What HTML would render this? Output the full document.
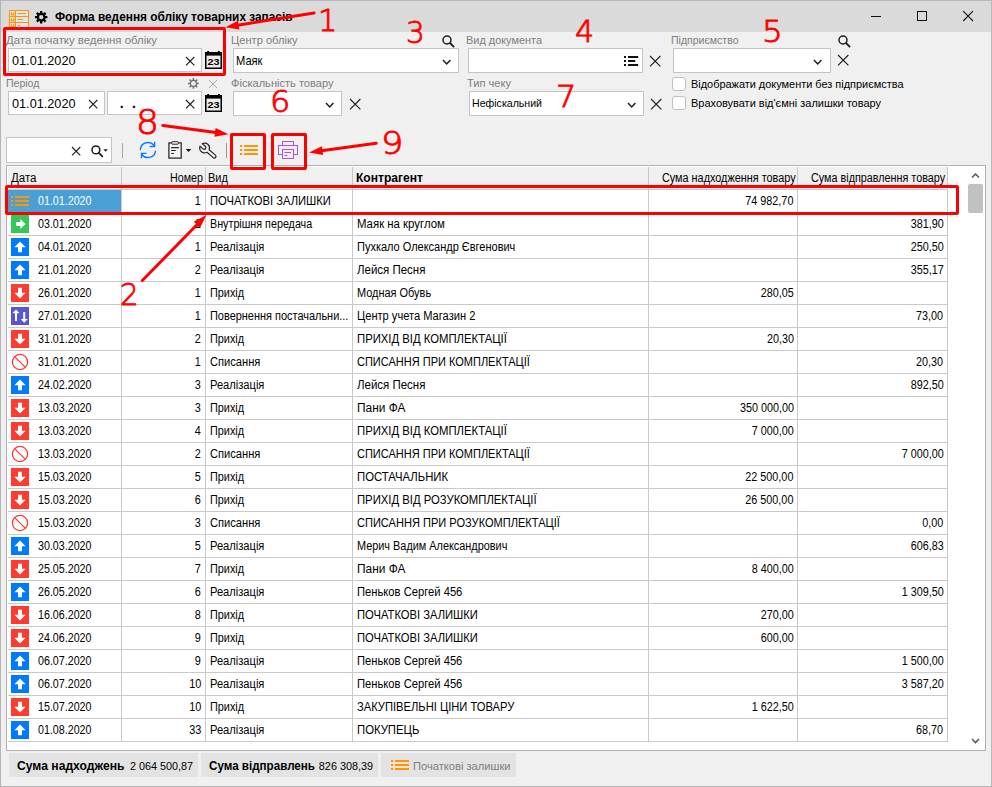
<!DOCTYPE html>
<html lang="uk"><head><meta charset="utf-8"><title>Форма ведення обліку товарних запасів</title>
<style>
html,body{margin:0;padding:0}
body{width:992px;height:787px;overflow:hidden;position:relative;background:#f0f0f0;font-family:'Liberation Sans',sans-serif;}
.t{position:absolute;white-space:pre;line-height:normal;}
svg{position:absolute;overflow:visible}
.d{font-family:'DejaVu Sans',sans-serif;font-weight:200;color:#f00;-webkit-text-stroke:0.9px #f00;transform-origin:0 0;}
</style></head>
<body>
<div style="position:absolute;left:0px;top:0px;width:992px;height:32px;background:#dadada;"></div>
<div style="position:absolute;left:0px;top:0px;width:992px;height:1px;background:#b9b9b9;"></div>
<div style="position:absolute;left:0px;top:0px;width:1px;height:787px;background:#b4b4b4;"></div>
<div style="position:absolute;left:991px;top:0px;width:1px;height:787px;background:#b9b9b9;"></div>
<div style="position:absolute;left:0px;top:786px;width:992px;height:1px;background:#b9b9b9;"></div>
<svg style="left:9px;top:10px" width="21" height="20" viewBox="0 0 21 20">
<rect x="0.5" y="0.5" width="19" height="18" fill="#dfe6f1" stroke="#ff9500" stroke-width="1"/>
<path d="M0.5 6.5H19.5M0.5 12.5H19.5M6.5 0.5V18.5" stroke="#ff9500" stroke-width="1" fill="none"/>
<path d="M8.5 3.5H17M8.5 9.5H14M8.5 15.5H11" stroke="#ff9500" stroke-width="1.2" fill="none"/>
<path d="M2.3 2V5H4.9V2M2.3 8V11H4.9V8M2.3 14V17H4.9V14" stroke="#ff9500" stroke-width="1.1" fill="none"/>
<path d="M2.6 3.2L3.6 4.4L4.6 3.2M2.6 9.2L3.6 10.4L4.6 9.2M2.6 15.2L3.6 16.4L4.6 15.2" stroke="#ff9500" stroke-width="0.9" fill="none"/>
</svg>
<svg style="left:34.8px;top:10.9px" width="12.4" height="12.4" viewBox="0 0 12.4 12.4"><path d="M9.50 6.20L12.40 6.20M8.53 8.53L10.58 10.58M6.20 9.50L6.20 12.40M3.87 8.53L1.82 10.58M2.90 6.20L0.00 6.20M3.87 3.87L1.82 1.82M6.20 2.90L6.20 0.00M8.53 3.87L10.58 1.82" stroke="#000" stroke-width="2.3" fill="none"/><circle cx="6.2" cy="6.2" r="3.3" fill="none" stroke="#000" stroke-width="2.3"/></svg>
<svg style="left:860px;top:5px" width="125" height="24" viewBox="0 0 125 24">
<path d="M11 11.5H21" stroke="#111" stroke-width="1"/>
<rect x="57.5" y="6.5" width="9" height="9" fill="none" stroke="#111" stroke-width="1"/>
<path d="M103.2 6.2L113 16M113 6.2L103.2 16" stroke="#111" stroke-width="1.1"/>
</svg>
<div style="position:absolute;left:8px;top:48px;width:192px;height:22px;background:#fff;border:1px solid #c4c4c4;"></div>
<svg style="left:185.6px;top:57px" width="8.3" height="8.3" viewBox="0 0 8.3 8.3"><path d="M0 0L8.3 8.3M8.3 0L0 8.3" stroke="#1c1c1c" stroke-width="1.1" fill="none"/></svg>
<svg style="left:205px;top:51px" width="17" height="18" viewBox="0 0 17 18">
<rect x="0.75" y="1.75" width="15.5" height="15.5" fill="#ececec" stroke="#000" stroke-width="1.5"/>
<rect x="0" y="1" width="17" height="3.6" fill="#000"/>
<rect x="2.2" y="0" width="1.8" height="2" fill="#000"/><rect x="13" y="0" width="1.8" height="2" fill="#000"/>
<text x="8.5" y="14.2" font-family="Liberation Sans, sans-serif" font-size="9.5" font-weight="bold" text-anchor="middle" fill="#000" textLength="12" lengthAdjust="spacingAndGlyphs">23</text>
</svg>
<svg style="left:441.5px;top:35.3px" width="13" height="13" viewBox="0 0 13 13">
<circle cx="5" cy="5" r="4" fill="none" stroke="#1c1c1c" stroke-width="1.5"/>
<path d="M8 8L11.6 11.6" stroke="#1c1c1c" stroke-width="1.8" stroke-linecap="round"/></svg>
<div style="position:absolute;left:233px;top:48px;width:224px;height:23px;background:#fff;border:1px solid #c4c4c4;"></div>
<svg style="left:442.8px;top:59.8px" width="7.4" height="3.9" viewBox="0 0 7.4 3.9"><path d="M0 0L3.7 3.9L7.4 0" stroke="#1c1c1c" stroke-width="1.5" fill="none"/></svg>
<div style="position:absolute;left:468px;top:48px;width:173px;height:23px;background:#fff;border:1px solid #c4c4c4;"></div>
<svg style="left:624px;top:56px" width="15" height="10" viewBox="0 0 15 10">
<path d="M0 1H2M0 5H2M0 9H2" stroke="#111" stroke-width="1.8"/>
<path d="M4 1H14.2M4 5H11.2M4 9H14.2" stroke="#111" stroke-width="1.8"/></svg>
<svg style="left:650.4px;top:56.4px" width="10.4" height="10.4" viewBox="0 0 10.4 10.4"><path d="M0 0L10.4 10.4M10.4 0L0 10.4" stroke="#1c1c1c" stroke-width="1.1" fill="none"/></svg>
<div style="position:absolute;left:673px;top:48px;width:156px;height:23px;background:#fff;border:1px solid #c4c4c4;"></div>
<svg style="left:814.4px;top:59.8px" width="7.4" height="3.9" viewBox="0 0 7.4 3.9"><path d="M0 0L3.7 3.9L7.4 0" stroke="#1c1c1c" stroke-width="1.5" fill="none"/></svg>
<svg style="left:838px;top:35.3px" width="13" height="13" viewBox="0 0 13 13">
<circle cx="5" cy="5" r="4" fill="none" stroke="#1c1c1c" stroke-width="1.5"/>
<path d="M8 8L11.6 11.6" stroke="#1c1c1c" stroke-width="1.8" stroke-linecap="round"/></svg>
<svg style="left:838.4px;top:55.4px" width="10.4" height="10.4" viewBox="0 0 10.4 10.4"><path d="M0 0L10.4 10.4M10.4 0L0 10.4" stroke="#1c1c1c" stroke-width="1.1" fill="none"/></svg>
<svg style="left:188.1px;top:77.7px" width="10.8" height="10.8" viewBox="0 0 10.8 10.8"><path d="M8.50 5.40L10.80 5.40M7.59 7.59L9.22 9.22M5.40 8.50L5.40 10.80M3.21 7.59L1.58 9.22M2.30 5.40L0.00 5.40M3.21 3.21L1.58 1.58M5.40 2.30L5.40 0.00M7.59 3.21L9.22 1.58" stroke="#727272" stroke-width="1.5" fill="none"/><circle cx="5.4" cy="5.4" r="3.1" fill="none" stroke="#727272" stroke-width="1.3"/></svg>
<svg style="left:209px;top:80px" width="8" height="8" viewBox="0 0 8 8"><path d="M0 0L8 8M8 0L0 8" stroke="#a8a8a8" stroke-width="1.0" fill="none"/></svg>
<div style="position:absolute;left:8px;top:91px;width:95px;height:22px;background:#fff;border:1px solid #c4c4c4;"></div>
<svg style="left:88.6px;top:100px" width="8.3" height="8.3" viewBox="0 0 8.3 8.3"><path d="M0 0L8.3 8.3M8.3 0L0 8.3" stroke="#1c1c1c" stroke-width="1.1" fill="none"/></svg>
<div style="position:absolute;left:107px;top:91px;width:93px;height:22px;background:#fff;border:1px solid #c4c4c4;"></div>
<svg style="left:185.6px;top:100px" width="8.3" height="8.3" viewBox="0 0 8.3 8.3"><path d="M0 0L8.3 8.3M8.3 0L0 8.3" stroke="#1c1c1c" stroke-width="1.1" fill="none"/></svg>
<svg style="left:205px;top:94px" width="17" height="18" viewBox="0 0 17 18">
<rect x="0.75" y="1.75" width="15.5" height="15.5" fill="#ececec" stroke="#000" stroke-width="1.5"/>
<rect x="0" y="1" width="17" height="3.6" fill="#000"/>
<rect x="2.2" y="0" width="1.8" height="2" fill="#000"/><rect x="13" y="0" width="1.8" height="2" fill="#000"/>
<text x="8.5" y="14.2" font-family="Liberation Sans, sans-serif" font-size="9.5" font-weight="bold" text-anchor="middle" fill="#000" textLength="12" lengthAdjust="spacingAndGlyphs">23</text>
</svg>
<div style="position:absolute;left:233px;top:91px;width:107px;height:23px;background:#fff;border:1px solid #c4c4c4;"></div>
<svg style="left:325.6px;top:102.8px" width="7.4" height="3.9" viewBox="0 0 7.4 3.9"><path d="M0 0L3.7 3.9L7.4 0" stroke="#1c1c1c" stroke-width="1.5" fill="none"/></svg>
<svg style="left:349.6px;top:99.4px" width="10.4" height="10.4" viewBox="0 0 10.4 10.4"><path d="M0 0L10.4 10.4M10.4 0L0 10.4" stroke="#1c1c1c" stroke-width="1.1" fill="none"/></svg>
<div style="position:absolute;left:469px;top:91px;width:173px;height:23px;background:#fff;border:1px solid #c4c4c4;"></div>
<svg style="left:627.6px;top:102.8px" width="7.4" height="3.9" viewBox="0 0 7.4 3.9"><path d="M0 0L3.7 3.9L7.4 0" stroke="#1c1c1c" stroke-width="1.5" fill="none"/></svg>
<svg style="left:651.3px;top:99.4px" width="10.4" height="10.4" viewBox="0 0 10.4 10.4"><path d="M0 0L10.4 10.4M10.4 0L0 10.4" stroke="#1c1c1c" stroke-width="1.1" fill="none"/></svg>
<div style="position:absolute;left:672px;top:77px;width:12px;height:12px;background:#fff;border:1px solid #c0c0c0;border-radius:3px;"></div>
<div style="position:absolute;left:672px;top:96px;width:12px;height:12px;background:#fff;border:1px solid #c0c0c0;border-radius:3px;"></div>
<div style="position:absolute;left:6px;top:137px;width:104px;height:24px;background:#fff;border:1px solid #c4c4c4;"></div>
<svg style="left:71.6px;top:147px" width="8.3" height="8.3" viewBox="0 0 8.3 8.3"><path d="M0 0L8.3 8.3M8.3 0L0 8.3" stroke="#1c1c1c" stroke-width="1.1" fill="none"/></svg>
<svg style="left:91px;top:145px" width="18" height="13" viewBox="0 0 18 13">
<circle cx="4.9" cy="4.9" r="3.9" fill="none" stroke="#1c1c1c" stroke-width="1.5"/>
<path d="M7.8 7.8L11.3 11.3" stroke="#1c1c1c" stroke-width="1.8" stroke-linecap="round"/>
<path d="M12.4 4.2H16.8L14.6 6.8Z" fill="#1c1c1c"/></svg>
<div style="position:absolute;left:122px;top:143px;width:1px;height:15px;background:#a6a6a6;"></div>
<svg style="left:139px;top:141px" width="18" height="18" viewBox="0 0 18 18">
<path d="M1.4 8.6A7.55 7.55 0 0 1 15.3 5.0M16.5 10.3A7.55 7.55 0 0 1 2.7 13.0" fill="none" stroke="#0a7aff" stroke-width="1.4" stroke-linecap="round"/>
<path d="M15.6 1.3V5.5H11.2M2.5 16.8V12.4H6.9" fill="none" stroke="#0a7aff" stroke-width="1.4" stroke-linecap="round" stroke-linejoin="miter"/></svg>
<svg style="left:167px;top:140px" width="26" height="20" viewBox="0 0 26 20">
<rect x="1.9" y="2.9" width="12.3" height="15.2" fill="#f2f2f2" stroke="#262626" stroke-width="1.25"/>
<rect x="4.8" y="1.7" width="6.5" height="2.5" rx="0.5" fill="#f4f4f4" stroke="#2c2c2c" stroke-width="1"/>
<path d="M4.2 7.6H11.8M4.2 10.5H8.8M4.2 13.4H6.9" stroke="#262626" stroke-width="1.05"/>
<path d="M18.8 8.9H24.3L21.55 12.1Z" fill="#111"/></svg>
<svg style="left:199px;top:141px" width="19" height="18" viewBox="0 0 19 18">
<path d="M8.00 11.27L14.22 16.65A1.65 1.65 0 0 0 16.38 14.15L10.16 8.78A4.9 4.9 0 0 0 3.25 2.70L6.26 5.32A1.7 1.7 0 0 1 4.03 7.89L1.02 5.27A4.9 4.9 0 0 0 8.00 11.27Z" fill="#f3f3f3" stroke="#2a2a2a" stroke-width="1.25" stroke-linejoin="round"/></svg>
<div style="position:absolute;left:226px;top:143px;width:1px;height:15px;background:#9a9a9a;"></div>
<svg style="left:240px;top:145px" width="18" height="10" viewBox="0 0 18 10">
<path d="M0 1H2.2M0 5H2.2M0 9H2.2M4 1H18M4 5H18M4 9H18" stroke="#ff9500" stroke-width="2" fill="none"/></svg>
<svg style="left:278px;top:141px" width="20" height="18" viewBox="0 0 20 18">
<rect x="0.5" y="4.5" width="19" height="9" fill="none" stroke="#af52de" stroke-width="1"/>
<rect x="4.5" y="0.5" width="11" height="4" fill="none" stroke="#af52de" stroke-width="1"/>
<rect x="4.5" y="8.5" width="11" height="9" fill="#f0f0f0" stroke="#af52de" stroke-width="1"/>
<path d="M6.5 11.5H13M6.5 14.5H9.3" stroke="#af52de" stroke-width="1"/></svg>
<div style="position:absolute;left:6px;top:165px;width:978px;height:584px;background:#fff;border:1px solid #b2b2b2;"></div>
<div style="position:absolute;left:8px;top:167px;width:939px;height:22px;background:#f0f0f0;"></div>
<div style="position:absolute;left:8px;top:189px;width:940px;height:1px;background:#c9c9c9;"></div>
<div style="position:absolute;left:121px;top:167px;width:1px;height:575px;background:#c9c9c9;"></div>
<div style="position:absolute;left:205px;top:167px;width:1px;height:575px;background:#c9c9c9;"></div>
<div style="position:absolute;left:352px;top:167px;width:1px;height:575px;background:#c9c9c9;"></div>
<div style="position:absolute;left:648px;top:167px;width:1px;height:575px;background:#c9c9c9;"></div>
<div style="position:absolute;left:797px;top:167px;width:1px;height:575px;background:#c9c9c9;"></div>
<div style="position:absolute;left:947px;top:167px;width:1px;height:575px;background:#c9c9c9;"></div>
<div style="position:absolute;left:8px;top:212px;width:940px;height:1px;background:#c9c9c9;"></div>
<div style="position:absolute;left:8px;top:235px;width:940px;height:1px;background:#c9c9c9;"></div>
<div style="position:absolute;left:8px;top:258px;width:940px;height:1px;background:#c9c9c9;"></div>
<div style="position:absolute;left:8px;top:281px;width:940px;height:1px;background:#c9c9c9;"></div>
<div style="position:absolute;left:8px;top:304px;width:940px;height:1px;background:#c9c9c9;"></div>
<div style="position:absolute;left:8px;top:327px;width:940px;height:1px;background:#c9c9c9;"></div>
<div style="position:absolute;left:8px;top:350px;width:940px;height:1px;background:#c9c9c9;"></div>
<div style="position:absolute;left:8px;top:373px;width:940px;height:1px;background:#c9c9c9;"></div>
<div style="position:absolute;left:8px;top:396px;width:940px;height:1px;background:#c9c9c9;"></div>
<div style="position:absolute;left:8px;top:419px;width:940px;height:1px;background:#c9c9c9;"></div>
<div style="position:absolute;left:8px;top:442px;width:940px;height:1px;background:#c9c9c9;"></div>
<div style="position:absolute;left:8px;top:465px;width:940px;height:1px;background:#c9c9c9;"></div>
<div style="position:absolute;left:8px;top:488px;width:940px;height:1px;background:#c9c9c9;"></div>
<div style="position:absolute;left:8px;top:511px;width:940px;height:1px;background:#c9c9c9;"></div>
<div style="position:absolute;left:8px;top:534px;width:940px;height:1px;background:#c9c9c9;"></div>
<div style="position:absolute;left:8px;top:557px;width:940px;height:1px;background:#c9c9c9;"></div>
<div style="position:absolute;left:8px;top:580px;width:940px;height:1px;background:#c9c9c9;"></div>
<div style="position:absolute;left:8px;top:603px;width:940px;height:1px;background:#c9c9c9;"></div>
<div style="position:absolute;left:8px;top:626px;width:940px;height:1px;background:#c9c9c9;"></div>
<div style="position:absolute;left:8px;top:649px;width:940px;height:1px;background:#c9c9c9;"></div>
<div style="position:absolute;left:8px;top:672px;width:940px;height:1px;background:#c9c9c9;"></div>
<div style="position:absolute;left:8px;top:695px;width:940px;height:1px;background:#c9c9c9;"></div>
<div style="position:absolute;left:8px;top:718px;width:940px;height:1px;background:#c9c9c9;"></div>
<div style="position:absolute;left:8px;top:741px;width:940px;height:1px;background:#c9c9c9;"></div>
<svg style="left:972.2px;top:173.9px" width="7" height="3.6" viewBox="0 0 7 3.6"><path d="M0 3.6L3.5 0L7 3.6" stroke="#555" stroke-width="1.5" fill="none"/></svg>
<svg style="left:972.2px;top:738.9px" width="7" height="3.6" viewBox="0 0 7 3.6"><path d="M0 0L3.5 3.6L7 0" stroke="#555" stroke-width="1.5" fill="none"/></svg>
<div style="position:absolute;left:968px;top:184px;width:15px;height:29px;background:#c1c1c1;border-radius:2px;"></div>
<div style="position:absolute;left:8px;top:190px;width:113px;height:22px;background:#4a9fd5;"></div>
<svg style="left:11px;top:196px" width="18" height="10" viewBox="0 0 18 10">
<path d="M0 1H2.2M0 5H2.2M0 9H2.2M4 1H18M4 5H18M4 9H18" stroke="#ff9500" stroke-width="2" fill="none"/></svg>
<svg style="left:11px;top:215px" width="18" height="18" viewBox="0 0 18 18"><rect width="18" height="18" fill="#34c759"/><path d="M5 7H9.4V4L14.4 9L9.4 14V11H5Z" fill="#fff"/></svg>
<svg style="left:11px;top:238px" width="18" height="18" viewBox="0 0 18 18"><rect width="18" height="18" fill="#007aff"/><path d="M9 3.6L14.6 9.2H11V14.2H7V9.2H3.4Z" fill="#fff"/></svg>
<svg style="left:11px;top:261px" width="18" height="18" viewBox="0 0 18 18"><rect width="18" height="18" fill="#007aff"/><path d="M9 3.6L14.6 9.2H11V14.2H7V9.2H3.4Z" fill="#fff"/></svg>
<svg style="left:11px;top:284px" width="18" height="18" viewBox="0 0 18 18"><rect width="18" height="18" fill="#ff3b30"/><path d="M9 14.4L14.6 8.8H11V3.8H7V8.8H3.4Z" fill="#fff"/></svg>
<svg style="left:11px;top:307px" width="18" height="18" viewBox="0 0 18 18"><rect width="18" height="18" fill="#5856d6"/><path d="M5 2.4L8.6 6.2H6V14H4V6.2H1.4Z" fill="#fff"/><path d="M13.2 15.8L16.8 12H14.2V5H12.2V12H9.6Z" fill="#fff"/></svg>
<svg style="left:11px;top:330px" width="18" height="18" viewBox="0 0 18 18"><rect width="18" height="18" fill="#ff3b30"/><path d="M9 14.4L14.6 8.8H11V3.8H7V8.8H3.4Z" fill="#fff"/></svg>
<svg style="left:11px;top:353px" width="18" height="18" viewBox="0 0 18 18"><circle cx="9" cy="9" r="7.6" fill="none" stroke="#ff3b30" stroke-width="1.3"/><path d="M3.6 3.6L14.4 14.4" stroke="#ff3b30" stroke-width="1.3"/></svg>
<svg style="left:11px;top:376px" width="18" height="18" viewBox="0 0 18 18"><rect width="18" height="18" fill="#007aff"/><path d="M9 3.6L14.6 9.2H11V14.2H7V9.2H3.4Z" fill="#fff"/></svg>
<svg style="left:11px;top:399px" width="18" height="18" viewBox="0 0 18 18"><rect width="18" height="18" fill="#ff3b30"/><path d="M9 14.4L14.6 8.8H11V3.8H7V8.8H3.4Z" fill="#fff"/></svg>
<svg style="left:11px;top:422px" width="18" height="18" viewBox="0 0 18 18"><rect width="18" height="18" fill="#ff3b30"/><path d="M9 14.4L14.6 8.8H11V3.8H7V8.8H3.4Z" fill="#fff"/></svg>
<svg style="left:11px;top:445px" width="18" height="18" viewBox="0 0 18 18"><circle cx="9" cy="9" r="7.6" fill="none" stroke="#ff3b30" stroke-width="1.3"/><path d="M3.6 3.6L14.4 14.4" stroke="#ff3b30" stroke-width="1.3"/></svg>
<svg style="left:11px;top:468px" width="18" height="18" viewBox="0 0 18 18"><rect width="18" height="18" fill="#ff3b30"/><path d="M9 14.4L14.6 8.8H11V3.8H7V8.8H3.4Z" fill="#fff"/></svg>
<svg style="left:11px;top:491px" width="18" height="18" viewBox="0 0 18 18"><rect width="18" height="18" fill="#ff3b30"/><path d="M9 14.4L14.6 8.8H11V3.8H7V8.8H3.4Z" fill="#fff"/></svg>
<svg style="left:11px;top:514px" width="18" height="18" viewBox="0 0 18 18"><circle cx="9" cy="9" r="7.6" fill="none" stroke="#ff3b30" stroke-width="1.3"/><path d="M3.6 3.6L14.4 14.4" stroke="#ff3b30" stroke-width="1.3"/></svg>
<svg style="left:11px;top:537px" width="18" height="18" viewBox="0 0 18 18"><rect width="18" height="18" fill="#007aff"/><path d="M9 3.6L14.6 9.2H11V14.2H7V9.2H3.4Z" fill="#fff"/></svg>
<svg style="left:11px;top:560px" width="18" height="18" viewBox="0 0 18 18"><rect width="18" height="18" fill="#ff3b30"/><path d="M9 14.4L14.6 8.8H11V3.8H7V8.8H3.4Z" fill="#fff"/></svg>
<svg style="left:11px;top:583px" width="18" height="18" viewBox="0 0 18 18"><rect width="18" height="18" fill="#007aff"/><path d="M9 3.6L14.6 9.2H11V14.2H7V9.2H3.4Z" fill="#fff"/></svg>
<svg style="left:11px;top:606px" width="18" height="18" viewBox="0 0 18 18"><rect width="18" height="18" fill="#ff3b30"/><path d="M9 14.4L14.6 8.8H11V3.8H7V8.8H3.4Z" fill="#fff"/></svg>
<svg style="left:11px;top:629px" width="18" height="18" viewBox="0 0 18 18"><rect width="18" height="18" fill="#ff3b30"/><path d="M9 14.4L14.6 8.8H11V3.8H7V8.8H3.4Z" fill="#fff"/></svg>
<svg style="left:11px;top:652px" width="18" height="18" viewBox="0 0 18 18"><rect width="18" height="18" fill="#007aff"/><path d="M9 3.6L14.6 9.2H11V14.2H7V9.2H3.4Z" fill="#fff"/></svg>
<svg style="left:11px;top:675px" width="18" height="18" viewBox="0 0 18 18"><rect width="18" height="18" fill="#007aff"/><path d="M9 3.6L14.6 9.2H11V14.2H7V9.2H3.4Z" fill="#fff"/></svg>
<svg style="left:11px;top:698px" width="18" height="18" viewBox="0 0 18 18"><rect width="18" height="18" fill="#ff3b30"/><path d="M9 14.4L14.6 8.8H11V3.8H7V8.8H3.4Z" fill="#fff"/></svg>
<svg style="left:11px;top:721px" width="18" height="18" viewBox="0 0 18 18"><rect width="18" height="18" fill="#007aff"/><path d="M9 3.6L14.6 9.2H11V14.2H7V9.2H3.4Z" fill="#fff"/></svg>
<div style="position:absolute;left:9px;top:753px;width:189px;height:24px;background:#e3e3e3;"></div>
<div style="position:absolute;left:201px;top:753px;width:177px;height:24px;background:#e3e3e3;"></div>
<div style="position:absolute;left:381px;top:753px;width:135px;height:24px;background:#e3e3e3;"></div>
<svg style="left:391px;top:760px" width="18" height="10" viewBox="0 0 18 10">
<path d="M0 1H2.2M0 5H2.2M0 9H2.2M4 1H18M4 5H18M4 9H18" stroke="#ff9500" stroke-width="2" fill="none"/></svg>
<span class="t" style="left:55px;transform-origin:0 0;top:10px;font-size:12px;font-weight:bold;color:#000;transform:scaleX(0.9871);">Форма ведення обліку товарних запасів</span>
<span class="t" style="left:6px;transform-origin:0 0;top:34px;font-size:11px;color:#7e7e7e;transform:scaleX(1.0349);">Дата початку ведення обліку</span>
<span class="t" style="left:12px;transform-origin:0 0;top:53px;font-size:13px;color:#000;transform:scaleX(0.9758);">01.01.2020</span>
<span class="t" style="left:230.5px;transform-origin:0 0;top:34px;font-size:11px;color:#7e7e7e;transform:scaleX(1.0112);">Центр обліку</span>
<span class="t" style="left:236px;transform-origin:0 0;top:53px;font-size:13px;color:#000;transform:scaleX(0.8566);">Маяк</span>
<span class="t" style="left:466px;transform-origin:0 0;top:34px;font-size:11px;color:#7e7e7e;transform:scaleX(0.9922);">Вид документа</span>
<span class="t" style="left:670.5px;transform-origin:0 0;top:34px;font-size:11px;color:#7e7e7e;transform:scaleX(0.9568);">Підприємство</span>
<span class="t" style="left:5.6px;transform-origin:0 0;top:77px;font-size:11px;color:#7e7e7e;transform:scaleX(0.9573);">Період</span>
<span class="t" style="left:12px;transform-origin:0 0;top:96px;font-size:13px;color:#000;transform:scaleX(0.9758);">01.01.2020</span>
<span class="t" style="left:119.8px;transform-origin:0 0;top:95px;font-size:14px;font-weight:bold;color:#000;">.</span>
<span class="t" style="left:131.9px;transform-origin:0 0;top:95px;font-size:14px;font-weight:bold;color:#000;">.</span>
<span class="t" style="left:230.5px;transform-origin:0 0;top:77px;font-size:11px;color:#7e7e7e;transform:scaleX(1.0064);">Фіскальність товару</span>
<span class="t" style="left:467px;transform-origin:0 0;top:77px;font-size:11px;color:#7e7e7e;transform:scaleX(1.0072);">Тип чеку</span>
<span class="t" style="left:472px;transform-origin:0 0;top:97px;font-size:11px;color:#000;transform:scaleX(0.9622);">Нефіскальний</span>
<span class="t" style="left:690.5px;transform-origin:0 0;top:78px;font-size:11px;color:#000;transform:scaleX(0.9934);">Відображати документи без підприємства</span>
<span class="t" style="left:690.5px;transform-origin:0 0;top:97px;font-size:11px;color:#000;transform:scaleX(0.9974);">Враховувати від&#x27;ємні залишки товару</span>
<span class="t" style="left:11px;transform-origin:0 0;top:171px;font-size:12px;color:#000;transform:scaleX(0.9594);">Дата</span>
<span class="t" style="right:789px;transform-origin:100% 0;top:171px;font-size:12px;color:#000;transform:scaleX(0.8934);">Номер</span>
<span class="t" style="left:208px;transform-origin:0 0;top:171px;font-size:12px;color:#000;transform:scaleX(0.9200);">Вид</span>
<span class="t" style="left:355.5px;transform-origin:0 0;top:171px;font-size:12px;font-weight:bold;color:#000;transform:scaleX(1.0061);">Контрагент</span>
<span class="t" style="right:196px;transform-origin:100% 0;top:171px;font-size:12px;color:#000;transform:scaleX(0.9060);">Сума надходження товару</span>
<span class="t" style="right:46.5px;transform-origin:100% 0;top:171px;font-size:12px;color:#000;transform:scaleX(0.8991);">Сума відправлення товару</span>
<span class="t" style="left:37.5px;transform-origin:0 0;top:194px;font-size:12px;color:#fff;transform:scaleX(0.8907);">01.01.2020</span>
<span class="t" style="right:791px;transform-origin:100% 0;top:194px;font-size:12px;color:#000;transform:scaleX(0.9050);">1</span>
<span class="t" style="left:209.5px;transform-origin:0 0;top:194px;font-size:12px;color:#000;transform:scaleX(0.9325);">ПОЧАТКОВІ ЗАЛИШКИ</span>
<span class="t" style="right:198.39999999999998px;transform-origin:100% 0;top:194px;font-size:12px;color:#000;transform:scaleX(0.9000);">74 982,70</span>
<span class="t" style="left:37.5px;transform-origin:0 0;top:217px;font-size:12px;color:#000;transform:scaleX(0.8907);">03.01.2020</span>
<span class="t" style="right:791px;transform-origin:100% 0;top:217px;font-size:12px;color:#000;transform:scaleX(0.9050);">1</span>
<span class="t" style="left:209.5px;transform-origin:0 0;top:217px;font-size:12px;color:#000;transform:scaleX(0.8953);">Внутрішня передача</span>
<span class="t" style="left:356.5px;transform-origin:0 0;top:217px;font-size:12px;color:#000;transform:scaleX(0.9499);">Маяк на круглом</span>
<span class="t" style="right:48.60000000000002px;transform-origin:100% 0;top:217px;font-size:12px;color:#000;transform:scaleX(0.9000);">381,90</span>
<span class="t" style="left:37.5px;transform-origin:0 0;top:240px;font-size:12px;color:#000;transform:scaleX(0.8907);">04.01.2020</span>
<span class="t" style="right:791px;transform-origin:100% 0;top:240px;font-size:12px;color:#000;transform:scaleX(0.9050);">1</span>
<span class="t" style="left:209.5px;transform-origin:0 0;top:240px;font-size:12px;color:#000;transform:scaleX(0.9265);">Реалізація</span>
<span class="t" style="left:356.5px;transform-origin:0 0;top:240px;font-size:12px;color:#000;transform:scaleX(0.9156);">Пухкало Олександр Євгенович</span>
<span class="t" style="right:48.60000000000002px;transform-origin:100% 0;top:240px;font-size:12px;color:#000;transform:scaleX(0.9000);">250,50</span>
<span class="t" style="left:37.5px;transform-origin:0 0;top:263px;font-size:12px;color:#000;transform:scaleX(0.8907);">21.01.2020</span>
<span class="t" style="right:791px;transform-origin:100% 0;top:263px;font-size:12px;color:#000;transform:scaleX(0.9050);">2</span>
<span class="t" style="left:209.5px;transform-origin:0 0;top:263px;font-size:12px;color:#000;transform:scaleX(0.9265);">Реалізація</span>
<span class="t" style="left:356.5px;transform-origin:0 0;top:263px;font-size:12px;color:#000;transform:scaleX(0.9557);">Лейся Песня</span>
<span class="t" style="right:48.60000000000002px;transform-origin:100% 0;top:263px;font-size:12px;color:#000;transform:scaleX(0.9000);">355,17</span>
<span class="t" style="left:37.5px;transform-origin:0 0;top:286px;font-size:12px;color:#000;transform:scaleX(0.8907);">26.01.2020</span>
<span class="t" style="right:791px;transform-origin:100% 0;top:286px;font-size:12px;color:#000;transform:scaleX(0.9050);">1</span>
<span class="t" style="left:209.5px;transform-origin:0 0;top:286px;font-size:12px;color:#000;transform:scaleX(0.9052);">Прихід</span>
<span class="t" style="left:356.5px;transform-origin:0 0;top:286px;font-size:12px;color:#000;transform:scaleX(0.9120);">Модная Обувь</span>
<span class="t" style="right:198.39999999999998px;transform-origin:100% 0;top:286px;font-size:12px;color:#000;transform:scaleX(0.9000);">280,05</span>
<span class="t" style="left:37.5px;transform-origin:0 0;top:309px;font-size:12px;color:#000;transform:scaleX(0.8907);">27.01.2020</span>
<span class="t" style="right:791px;transform-origin:100% 0;top:309px;font-size:12px;color:#000;transform:scaleX(0.9050);">1</span>
<span class="t" style="left:209.5px;transform-origin:0 0;top:309px;font-size:12px;color:#000;transform:scaleX(0.9121);">Повернення постачальни...</span>
<span class="t" style="left:356.5px;transform-origin:0 0;top:309px;font-size:12px;color:#000;transform:scaleX(0.9255);">Центр учета Магазин 2</span>
<span class="t" style="right:48.60000000000002px;transform-origin:100% 0;top:309px;font-size:12px;color:#000;transform:scaleX(0.9000);">73,00</span>
<span class="t" style="left:37.5px;transform-origin:0 0;top:332px;font-size:12px;color:#000;transform:scaleX(0.8907);">31.01.2020</span>
<span class="t" style="right:791px;transform-origin:100% 0;top:332px;font-size:12px;color:#000;transform:scaleX(0.9050);">2</span>
<span class="t" style="left:209.5px;transform-origin:0 0;top:332px;font-size:12px;color:#000;transform:scaleX(0.9052);">Прихід</span>
<span class="t" style="left:356.5px;transform-origin:0 0;top:332px;font-size:12px;color:#000;transform:scaleX(0.9424);">ПРИХІД ВІД КОМПЛЕКТАЦІЇ</span>
<span class="t" style="right:198.39999999999998px;transform-origin:100% 0;top:332px;font-size:12px;color:#000;transform:scaleX(0.9000);">20,30</span>
<span class="t" style="left:37.5px;transform-origin:0 0;top:355px;font-size:12px;color:#000;transform:scaleX(0.8907);">31.01.2020</span>
<span class="t" style="right:791px;transform-origin:100% 0;top:355px;font-size:12px;color:#000;transform:scaleX(0.9050);">1</span>
<span class="t" style="left:209.5px;transform-origin:0 0;top:355px;font-size:12px;color:#000;transform:scaleX(0.9282);">Списання</span>
<span class="t" style="left:356.5px;transform-origin:0 0;top:355px;font-size:12px;color:#000;transform:scaleX(0.9174);">СПИСАННЯ ПРИ КОМПЛЕКТАЦІЇ</span>
<span class="t" style="right:48.60000000000002px;transform-origin:100% 0;top:355px;font-size:12px;color:#000;transform:scaleX(0.9000);">20,30</span>
<span class="t" style="left:37.5px;transform-origin:0 0;top:378px;font-size:12px;color:#000;transform:scaleX(0.8907);">24.02.2020</span>
<span class="t" style="right:791px;transform-origin:100% 0;top:378px;font-size:12px;color:#000;transform:scaleX(0.9050);">3</span>
<span class="t" style="left:209.5px;transform-origin:0 0;top:378px;font-size:12px;color:#000;transform:scaleX(0.9265);">Реалізація</span>
<span class="t" style="left:356.5px;transform-origin:0 0;top:378px;font-size:12px;color:#000;transform:scaleX(0.9557);">Лейся Песня</span>
<span class="t" style="right:48.60000000000002px;transform-origin:100% 0;top:378px;font-size:12px;color:#000;transform:scaleX(0.9000);">892,50</span>
<span class="t" style="left:37.5px;transform-origin:0 0;top:401px;font-size:12px;color:#000;transform:scaleX(0.8907);">13.03.2020</span>
<span class="t" style="right:791px;transform-origin:100% 0;top:401px;font-size:12px;color:#000;transform:scaleX(0.9050);">3</span>
<span class="t" style="left:209.5px;transform-origin:0 0;top:401px;font-size:12px;color:#000;transform:scaleX(0.9052);">Прихід</span>
<span class="t" style="left:356.5px;transform-origin:0 0;top:401px;font-size:12px;color:#000;transform:scaleX(0.9902);">Пани ФА</span>
<span class="t" style="right:198.39999999999998px;transform-origin:100% 0;top:401px;font-size:12px;color:#000;transform:scaleX(0.9000);">350 000,00</span>
<span class="t" style="left:37.5px;transform-origin:0 0;top:424px;font-size:12px;color:#000;transform:scaleX(0.8907);">13.03.2020</span>
<span class="t" style="right:791px;transform-origin:100% 0;top:424px;font-size:12px;color:#000;transform:scaleX(0.9050);">4</span>
<span class="t" style="left:209.5px;transform-origin:0 0;top:424px;font-size:12px;color:#000;transform:scaleX(0.9052);">Прихід</span>
<span class="t" style="left:356.5px;transform-origin:0 0;top:424px;font-size:12px;color:#000;transform:scaleX(0.9424);">ПРИХІД ВІД КОМПЛЕКТАЦІЇ</span>
<span class="t" style="right:198.39999999999998px;transform-origin:100% 0;top:424px;font-size:12px;color:#000;transform:scaleX(0.9000);">7 000,00</span>
<span class="t" style="left:37.5px;transform-origin:0 0;top:447px;font-size:12px;color:#000;transform:scaleX(0.8907);">13.03.2020</span>
<span class="t" style="right:791px;transform-origin:100% 0;top:447px;font-size:12px;color:#000;transform:scaleX(0.9050);">2</span>
<span class="t" style="left:209.5px;transform-origin:0 0;top:447px;font-size:12px;color:#000;transform:scaleX(0.9282);">Списання</span>
<span class="t" style="left:356.5px;transform-origin:0 0;top:447px;font-size:12px;color:#000;transform:scaleX(0.9174);">СПИСАННЯ ПРИ КОМПЛЕКТАЦІЇ</span>
<span class="t" style="right:48.60000000000002px;transform-origin:100% 0;top:447px;font-size:12px;color:#000;transform:scaleX(0.9000);">7 000,00</span>
<span class="t" style="left:37.5px;transform-origin:0 0;top:470px;font-size:12px;color:#000;transform:scaleX(0.8907);">15.03.2020</span>
<span class="t" style="right:791px;transform-origin:100% 0;top:470px;font-size:12px;color:#000;transform:scaleX(0.9050);">5</span>
<span class="t" style="left:209.5px;transform-origin:0 0;top:470px;font-size:12px;color:#000;transform:scaleX(0.9052);">Прихід</span>
<span class="t" style="left:356.5px;transform-origin:0 0;top:470px;font-size:12px;color:#000;transform:scaleX(0.9437);">ПОСТАЧАЛЬНИК</span>
<span class="t" style="right:198.39999999999998px;transform-origin:100% 0;top:470px;font-size:12px;color:#000;transform:scaleX(0.9000);">22 500,00</span>
<span class="t" style="left:37.5px;transform-origin:0 0;top:493px;font-size:12px;color:#000;transform:scaleX(0.8907);">15.03.2020</span>
<span class="t" style="right:791px;transform-origin:100% 0;top:493px;font-size:12px;color:#000;transform:scaleX(0.9050);">6</span>
<span class="t" style="left:209.5px;transform-origin:0 0;top:493px;font-size:12px;color:#000;transform:scaleX(0.9052);">Прихід</span>
<span class="t" style="left:356.5px;transform-origin:0 0;top:493px;font-size:12px;color:#000;transform:scaleX(0.9412);">ПРИХІД ВІД РОЗУКОМПЛЕКТАЦІЇ</span>
<span class="t" style="right:198.39999999999998px;transform-origin:100% 0;top:493px;font-size:12px;color:#000;transform:scaleX(0.9000);">26 500,00</span>
<span class="t" style="left:37.5px;transform-origin:0 0;top:516px;font-size:12px;color:#000;transform:scaleX(0.8907);">15.03.2020</span>
<span class="t" style="right:791px;transform-origin:100% 0;top:516px;font-size:12px;color:#000;transform:scaleX(0.9050);">3</span>
<span class="t" style="left:209.5px;transform-origin:0 0;top:516px;font-size:12px;color:#000;transform:scaleX(0.9282);">Списання</span>
<span class="t" style="left:356.5px;transform-origin:0 0;top:516px;font-size:12px;color:#000;transform:scaleX(0.9211);">СПИСАННЯ ПРИ РОЗУКОМПЛЕКТАЦІЇ</span>
<span class="t" style="right:48.60000000000002px;transform-origin:100% 0;top:516px;font-size:12px;color:#000;transform:scaleX(0.9000);">0,00</span>
<span class="t" style="left:37.5px;transform-origin:0 0;top:539px;font-size:12px;color:#000;transform:scaleX(0.8907);">30.03.2020</span>
<span class="t" style="right:791px;transform-origin:100% 0;top:539px;font-size:12px;color:#000;transform:scaleX(0.9050);">5</span>
<span class="t" style="left:209.5px;transform-origin:0 0;top:539px;font-size:12px;color:#000;transform:scaleX(0.9265);">Реалізація</span>
<span class="t" style="left:356.5px;transform-origin:0 0;top:539px;font-size:12px;color:#000;transform:scaleX(0.9069);">Мерич Вадим Александрович</span>
<span class="t" style="right:48.60000000000002px;transform-origin:100% 0;top:539px;font-size:12px;color:#000;transform:scaleX(0.9000);">606,83</span>
<span class="t" style="left:37.5px;transform-origin:0 0;top:562px;font-size:12px;color:#000;transform:scaleX(0.8907);">25.05.2020</span>
<span class="t" style="right:791px;transform-origin:100% 0;top:562px;font-size:12px;color:#000;transform:scaleX(0.9050);">7</span>
<span class="t" style="left:209.5px;transform-origin:0 0;top:562px;font-size:12px;color:#000;transform:scaleX(0.9052);">Прихід</span>
<span class="t" style="left:356.5px;transform-origin:0 0;top:562px;font-size:12px;color:#000;transform:scaleX(0.9902);">Пани ФА</span>
<span class="t" style="right:198.39999999999998px;transform-origin:100% 0;top:562px;font-size:12px;color:#000;transform:scaleX(0.9000);">8 400,00</span>
<span class="t" style="left:37.5px;transform-origin:0 0;top:585px;font-size:12px;color:#000;transform:scaleX(0.8907);">26.05.2020</span>
<span class="t" style="right:791px;transform-origin:100% 0;top:585px;font-size:12px;color:#000;transform:scaleX(0.9050);">6</span>
<span class="t" style="left:209.5px;transform-origin:0 0;top:585px;font-size:12px;color:#000;transform:scaleX(0.9265);">Реалізація</span>
<span class="t" style="left:356.5px;transform-origin:0 0;top:585px;font-size:12px;color:#000;transform:scaleX(0.9339);">Пеньков Сергей 456</span>
<span class="t" style="right:48.60000000000002px;transform-origin:100% 0;top:585px;font-size:12px;color:#000;transform:scaleX(0.9000);">1 309,50</span>
<span class="t" style="left:37.5px;transform-origin:0 0;top:608px;font-size:12px;color:#000;transform:scaleX(0.8907);">16.06.2020</span>
<span class="t" style="right:791px;transform-origin:100% 0;top:608px;font-size:12px;color:#000;transform:scaleX(0.9050);">8</span>
<span class="t" style="left:209.5px;transform-origin:0 0;top:608px;font-size:12px;color:#000;transform:scaleX(0.9052);">Прихід</span>
<span class="t" style="left:356.5px;transform-origin:0 0;top:608px;font-size:12px;color:#000;transform:scaleX(0.9325);">ПОЧАТКОВІ ЗАЛИШКИ</span>
<span class="t" style="right:198.39999999999998px;transform-origin:100% 0;top:608px;font-size:12px;color:#000;transform:scaleX(0.9000);">270,00</span>
<span class="t" style="left:37.5px;transform-origin:0 0;top:631px;font-size:12px;color:#000;transform:scaleX(0.8907);">24.06.2020</span>
<span class="t" style="right:791px;transform-origin:100% 0;top:631px;font-size:12px;color:#000;transform:scaleX(0.9050);">9</span>
<span class="t" style="left:209.5px;transform-origin:0 0;top:631px;font-size:12px;color:#000;transform:scaleX(0.9052);">Прихід</span>
<span class="t" style="left:356.5px;transform-origin:0 0;top:631px;font-size:12px;color:#000;transform:scaleX(0.9325);">ПОЧАТКОВІ ЗАЛИШКИ</span>
<span class="t" style="right:198.39999999999998px;transform-origin:100% 0;top:631px;font-size:12px;color:#000;transform:scaleX(0.9000);">600,00</span>
<span class="t" style="left:37.5px;transform-origin:0 0;top:654px;font-size:12px;color:#000;transform:scaleX(0.8907);">06.07.2020</span>
<span class="t" style="right:791px;transform-origin:100% 0;top:654px;font-size:12px;color:#000;transform:scaleX(0.9050);">9</span>
<span class="t" style="left:209.5px;transform-origin:0 0;top:654px;font-size:12px;color:#000;transform:scaleX(0.9265);">Реалізація</span>
<span class="t" style="left:356.5px;transform-origin:0 0;top:654px;font-size:12px;color:#000;transform:scaleX(0.9339);">Пеньков Сергей 456</span>
<span class="t" style="right:48.60000000000002px;transform-origin:100% 0;top:654px;font-size:12px;color:#000;transform:scaleX(0.9000);">1 500,00</span>
<span class="t" style="left:37.5px;transform-origin:0 0;top:677px;font-size:12px;color:#000;transform:scaleX(0.8907);">06.07.2020</span>
<span class="t" style="right:791px;transform-origin:100% 0;top:677px;font-size:12px;color:#000;transform:scaleX(0.9050);">10</span>
<span class="t" style="left:209.5px;transform-origin:0 0;top:677px;font-size:12px;color:#000;transform:scaleX(0.9265);">Реалізація</span>
<span class="t" style="left:356.5px;transform-origin:0 0;top:677px;font-size:12px;color:#000;transform:scaleX(0.9339);">Пеньков Сергей 456</span>
<span class="t" style="right:48.60000000000002px;transform-origin:100% 0;top:677px;font-size:12px;color:#000;transform:scaleX(0.9000);">3 587,20</span>
<span class="t" style="left:37.5px;transform-origin:0 0;top:700px;font-size:12px;color:#000;transform:scaleX(0.8907);">15.07.2020</span>
<span class="t" style="right:791px;transform-origin:100% 0;top:700px;font-size:12px;color:#000;transform:scaleX(0.9050);">10</span>
<span class="t" style="left:209.5px;transform-origin:0 0;top:700px;font-size:12px;color:#000;transform:scaleX(0.9052);">Прихід</span>
<span class="t" style="left:356.5px;transform-origin:0 0;top:700px;font-size:12px;color:#000;transform:scaleX(0.9312);">ЗАКУПІВЕЛЬНІ ЦІНИ ТОВАРУ</span>
<span class="t" style="right:198.39999999999998px;transform-origin:100% 0;top:700px;font-size:12px;color:#000;transform:scaleX(0.9000);">1 622,50</span>
<span class="t" style="left:37.5px;transform-origin:0 0;top:723px;font-size:12px;color:#000;transform:scaleX(0.8907);">01.08.2020</span>
<span class="t" style="right:791px;transform-origin:100% 0;top:723px;font-size:12px;color:#000;transform:scaleX(0.9050);">33</span>
<span class="t" style="left:209.5px;transform-origin:0 0;top:723px;font-size:12px;color:#000;transform:scaleX(0.9265);">Реалізація</span>
<span class="t" style="left:356.5px;transform-origin:0 0;top:723px;font-size:12px;color:#000;transform:scaleX(0.9434);">ПОКУПЕЦЬ</span>
<span class="t" style="right:48.60000000000002px;transform-origin:100% 0;top:723px;font-size:12px;color:#000;transform:scaleX(0.9000);">68,70</span>
<span class="t" style="left:16.5px;transform-origin:0 0;top:759px;font-size:12px;font-weight:bold;color:#000;transform:scaleX(1.0116);">Сума надходжень</span>
<span class="t" style="left:130px;transform-origin:0 0;top:760px;font-size:11px;color:#000;transform:scaleX(0.9808);">2 064 500,87</span>
<span class="t" style="left:209px;transform-origin:0 0;top:759px;font-size:12px;font-weight:bold;color:#000;transform:scaleX(0.9682);">Сума відправлень</span>
<span class="t" style="right:619px;transform-origin:100% 0;top:760px;font-size:11px;color:#000;transform:scaleX(0.9850);">826 308,39</span>
<span class="t" style="left:413px;transform-origin:0 0;top:760px;font-size:11px;color:#808080;transform:scaleX(1.0120);">Початкові залишки</span>
<div style="position:absolute;left:3px;top:27px;width:217px;height:43px;border:3px solid #ff0000;border-radius:2px;"></div>
<div style="position:absolute;left:5px;top:185px;width:948px;height:24px;border:3px solid #ff0000;border-radius:2px;"></div>
<div style="position:absolute;left:230px;top:133px;width:30px;height:31px;border:3px solid #ff0000;border-radius:2px;"></div>
<div style="position:absolute;left:271px;top:133px;width:30px;height:31px;border:3px solid #ff0000;border-radius:2px;"></div>
<svg style="left:0;top:0" width="992" height="787" viewBox="0 0 992 787"><path d="M314.1 12.9L237.7 25.2" stroke="#ff0000" stroke-width="3.0" stroke-linecap="round"/><path d="M225.4 27.2L238.0 20.7L239.4 29.4Z" fill="#ff0000"/></svg>
<svg style="left:0;top:0" width="992" height="787" viewBox="0 0 992 787"><path d="M162.9 125.5L216.0 132.6" stroke="#ff0000" stroke-width="3.0" stroke-linecap="round"/><path d="M228.4 134.2L214.4 136.8L215.6 128.1Z" fill="#ff0000"/></svg>
<svg style="left:0;top:0" width="992" height="787" viewBox="0 0 992 787"><path d="M376.2 143.3L321.5 150.7" stroke="#ff0000" stroke-width="3.0" stroke-linecap="round"/><path d="M309.1 152.4L321.9 146.2L323.1 154.9Z" fill="#ff0000"/></svg>
<svg style="left:0;top:0" width="992" height="787" viewBox="0 0 992 787"><path d="M142.3 280.5L197.7 224.0" stroke="#ff0000" stroke-width="3.0" stroke-linecap="round"/><path d="M206.4 215.1L200.1 227.8L193.8 221.7Z" fill="#ff0000"/></svg>
<span class="t d" style="left:318.05px;top:3.2px;font-size:30.31px;transform:scaleX(1.0078);">1</span>
<span class="t d" style="left:406.4px;top:14.9px;font-size:29.74px;transform:scaleX(0.9913);">3</span>
<span class="t d" style="left:574.7px;top:15.4px;font-size:29.52px;transform:scaleX(1.0175);">4</span>
<span class="t d" style="left:762.25px;top:14.95px;font-size:29.52px;transform:scaleX(1.1075);">5</span>
<span class="t d" style="left:269.65px;top:84.04px;font-size:29.83px;transform:scaleX(1.0697);">6</span>
<span class="t d" style="left:556.35px;top:79.0px;font-size:30.31px;transform:scaleX(1.0558);">7</span>
<span class="t d" style="left:135.95px;top:103.25px;font-size:33.13px;transform:scaleX(1.09);">8</span>
<span class="t d" style="left:380.5px;top:124.25px;font-size:32.27px;transform:scaleX(1.0922);">9</span>
<span class="t d" style="left:119.84px;top:276.52px;font-size:30.06px;transform:scaleX(0.9759);">2</span>
</body></html>
